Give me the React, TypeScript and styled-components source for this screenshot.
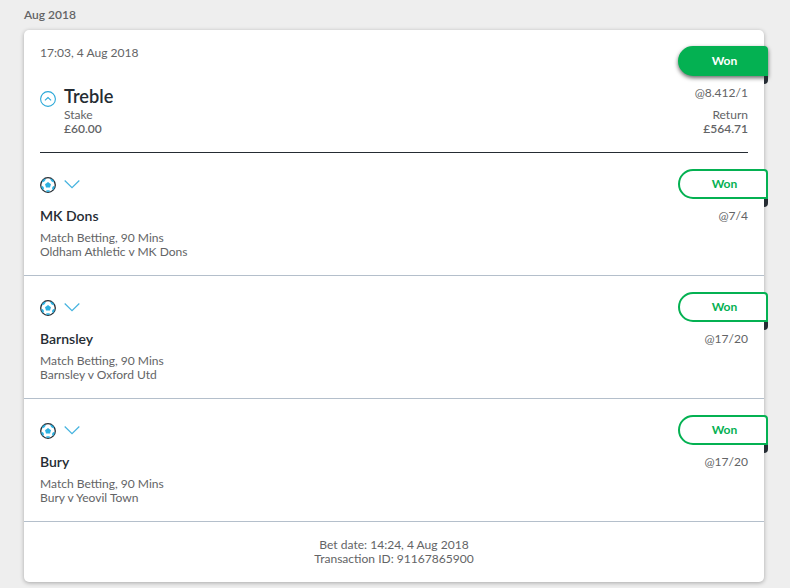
import React from "react";
import styled, { createGlobalStyle, css } from "styled-components";

const GlobalStyle = createGlobalStyle`
  * { box-sizing: border-box; }
  body {
    margin: 0;
    background: #eeeeee;
    color: #636466;
    font: 400 12.05px/14px Lato, "Open Sans", sans-serif;
  }
`;

const Page = styled.main`
  padding: 0 26px 6px 24px;
`;

const MonthHeading = styled.h2`
  height: 30px;
  margin: 0;
  padding-top: 8px;
  font-size: 12px;
  font-weight: 600;
  line-height: 14px;
`;

const Card = styled.article`
  height: 552px;
  background: #fff;
  border-radius: 5px;
  box-shadow: 0 1px 4px rgba(0, 0, 0, 0.3);
`;

const Header = styled.header`
  display: flex;
  justify-content: space-between;
  height: 123px;
  margin: 0 16px;
  padding-top: 16px;
  border-bottom: 1px solid #252c33;
`;

const SettledAt = styled.time`
  display: block;
  height: 42px;
  line-height: 14px;
`;

const Summary = styled.div`
  display: flex;
  gap: 8px;

  > svg { margin-top: 3px; }
`;

const BetType = styled.h1`
  margin: 0 0 3px;
  color: #252c33;
  font-size: 18.2px;
  font-weight: 600;
  line-height: 17px;
`;

const Amount = styled.div`
  font-weight: 600;
`;

const Side = styled.div`
  display: flex;
  flex-direction: column;
  align-items: flex-end;
  text-align: right;
`;

const Ribbon = styled.div<{ $filled?: boolean }>`
  position: relative;
  flex: none;
  width: 90px;
  height: 30px;
  margin-right: -20px;
  padding-left: 3px;
  border: 2px solid #04b152;
  border-radius: 15px 4px 0 15px;
  background: #fff;
  color: #04b152;
  font-weight: 700;
  line-height: 26px;
  text-align: center;

  &::after {
    content: "";
    position: absolute;
    top: 28px;
    right: -2px;
    width: 4px;
    height: 8px;
    border-radius: 0 0 4px 0;
    background: #252c33;
  }

  ${({ $filled }) =>
    $filled &&
    css`
      background: #04b152;
      color: #fff;
      box-shadow: 0 2px 4px rgba(0, 0, 0, 0.6);
    `}
`;

const Odds = styled.div`
  margin-top: 10px;
`;

const Return = styled.div`
  margin-top: 8px;
`;

const Selection = styled.section`
  display: flex;
  justify-content: space-between;
  height: 123px;
  padding: 16px 16px 0;
  border-bottom: 1px solid #b4bfcb;
`;

const Icons = styled.div`
  display: flex;
  align-items: center;
  gap: 8px;
  height: 16px;
  margin-top: 8px;
`;

const Team = styled.h3`
  margin: 15px 0 7px;
  color: #252c33;
  font-size: 14px;
  font-weight: 600;
  line-height: 16px;
`;

const Footer = styled.footer`
  padding-top: 16px;
  text-align: center;
`;

const CollapseIcon = () => (
  <svg width="16" height="16" viewBox="0 0 16 16" fill="none" stroke="#2aa8d8">
    <circle cx="8" cy="8" r="7.4" strokeWidth="1.1" />
    <path d="M4.9 9.4 8 6.6l3.1 2.8" strokeWidth="1.1" />
  </svg>
);

const BallIcon = () => (
  <svg width="16" height="16" viewBox="0 0 16 16">
    <circle cx="8" cy="8" r="7.4" fill="#fff" />
    <circle cx="8" cy="8" r="7.3" fill="none" stroke="#252c33" strokeWidth="1.3" />
    <g fill="#2bb0e0">
      <path d="M8 5 11 7.2 10 10.6H6L5 7.2Z" />
      <path d="M2.4 3.4 4.8 1.4 5.8 2.6 4.3 4.6 1.9 5.4ZM13.6 3.4 11.2 1.4 10.2 2.6l1.5 2 2.4.8Z" />
      <path d="m1.3 9 1.7.3 1 1.8-.6 2L1.9 12ZM14.7 9l-1.7.3-1 1.8.6 2 1.5-1.1Z" />
      <path d="m6 14.6.5-1.3h3l.5 1.3-2 .3Z" />
    </g>
  </svg>
);

const ExpandIcon = () => (
  <svg width="16" height="16" viewBox="0 0 16 16" fill="none" stroke="#45b3df">
    <path d="m.7 3.5 7.3 7.2 7.3-7.2" strokeWidth="1.2" />
  </svg>
);

const selections = [
  { team: "MK Dons", fixture: "Oldham Athletic v MK Dons", odds: "@7/4" },
  { team: "Barnsley", fixture: "Barnsley v Oxford Utd", odds: "@17/20" },
  { team: "Bury", fixture: "Bury v Yeovil Town", odds: "@17/20" },
];

export default function App() {
  return (
    <Page>
      <GlobalStyle />
      <MonthHeading>Aug 2018</MonthHeading>
      <Card>
        <Header>
          <div>
            <SettledAt>17:03, 4 Aug 2018</SettledAt>
            <Summary>
              <CollapseIcon />
              <div>
                <BetType>Treble</BetType>
                <div>Stake</div>
                <Amount>£60.00</Amount>
              </div>
            </Summary>
          </div>
          <Side>
            <Ribbon $filled>Won</Ribbon>
            <Odds>@8.412/1</Odds>
            <Return>Return</Return>
            <Amount>£564.71</Amount>
          </Side>
        </Header>
        {selections.map(({ team, fixture, odds }) => (
          <Selection key={team}>
            <div>
              <Icons>
                <BallIcon />
                <ExpandIcon />
              </Icons>
              <Team>{team}</Team>
              <div>Match Betting, 90 Mins</div>
              <div>{fixture}</div>
            </div>
            <Side>
              <Ribbon>Won</Ribbon>
              <Odds>{odds}</Odds>
            </Side>
          </Selection>
        ))}
        <Footer>
          <div>Bet date: 14:24, 4 Aug 2018</div>
          <div>Transaction ID: 91167865900</div>
        </Footer>
      </Card>
    </Page>
  );
}
